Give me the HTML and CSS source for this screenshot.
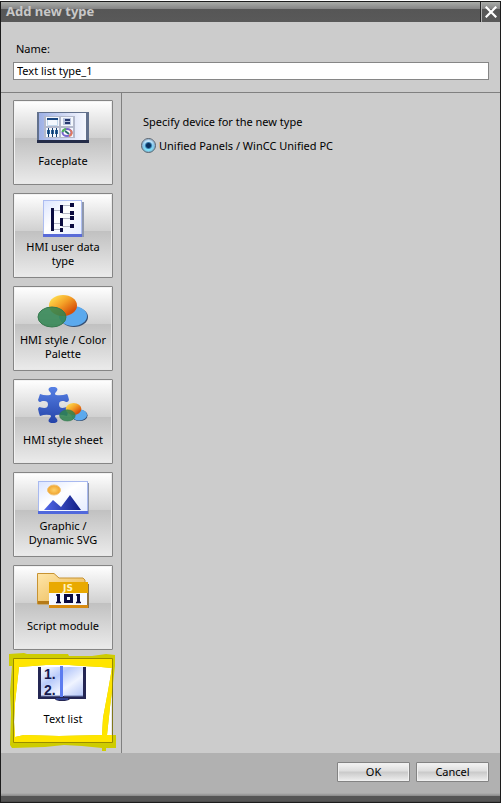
FILE: index.html
```html
<!DOCTYPE html>
<html lang="en">
<head>
<meta charset="utf-8">
<title>Add new type</title>
<link rel="stylesheet" href="styles.css">
</head>
<body>
<main class="dialog">
  <header class="titlebar">
    <h1>Add new type</h1>
    <button class="close" type="button" aria-label="Close">
      <svg viewBox="0 0 12 12" width="12" height="12"><path d="M1.500 1.500L10.500 10.500M10.500 1.500L1.500 10.500" stroke="#fff" stroke-width="2.200" stroke-linecap="square"/></svg>
    </button>
  </header>
  <div class="name-row">
    <label for="type-name">Name:</label>
    <input id="type-name" type="text" value="Text list type_1">
  </div>
  <div class="content">
    <nav class="types">
      <button class="type" type="button">
        <svg class="icon" viewBox="0 0 52 38">
          <defs><linearGradient id="screen"><stop offset="0" stop-color="#9cafe5"/><stop offset=".6" stop-color="#d7def6"/><stop offset="1" stop-color="#f5f8ff"/></linearGradient></defs>
          <path d="M0 5H52V36H0z" fill="#62718d"/><path d="M0 33H52V36H0z" fill="#242c48"/><path d="M2 6H49V33H2z" fill="url(#screen)"/>
          <path d="M7 9H38V31H7z" fill="#b3b9cc"/><path d="M9 10H22V19H9zM24 10H36V19H24zM9 21H22V30H9zM24 21H36V30H24z" fill="#f3f7fd"/>
          <path d="M10 11H21V13H10z" fill="#1a4680"/><path d="M10.500 13V18.500H20.500V13" fill="none" stroke="#c3d8ec"/>
          <path d="M26 11H34V18H26z" fill="#b9c3dd"/><path d="M28 12H33V14H28zM28 15H33V17H28z" fill="#25386e"/>
          <path d="M10 23H13V27H10zM14 23H17V27H14zM18 23H21V27H18z" fill="#286099"/><path d="M11 21H12V30H11zM15 21H16V30H15zM19 21H20V30H19z" fill="#123d70"/>
          <ellipse cx="30" cy="25.500" rx="4.500" ry="3.500" fill="#fff" stroke="#7966cd" stroke-width="2"/><path d="M25.500 25A4.500 3.500 0 0 1 29 22" fill="none" stroke="#4fb758" stroke-width="2"/><path d="M33 23A4.500 3.500 0 0 1 32 29" fill="none" stroke="#df785f" stroke-width="2"/><path d="M28 24L32 27" stroke="#276b68" stroke-width="2"/>
        </svg>
        <span>Faceplate</span>
      </button>
      <button class="type" type="button">
        <svg class="icon" viewBox="0 0 52 38">
          <defs><linearGradient id="sheet" x2="1" y2="1"><stop stop-color="#dbe5ff"/><stop offset=".45" stop-color="#fff"/><stop offset="1" stop-color="#e6edff"/></linearGradient></defs>
          <path d="M8 2H47V37H8z" fill="#8f98ad"/><path d="M6 0H45V36H6z" fill="#adbdf0"/><path d="M7 1H44V34H7z" fill="url(#sheet)"/><path d="M6 34H45V37H6z" fill="#596bd8"/>
          <path d="M15 10.500H25V5.500H34M25 10V13.500H34M15 23.500H25V18.500H34M25 23V26.500H34M15 29.500H25" fill="none" stroke="#b4b7c5"/>
          <path d="M14 8H17V31H14zM23 5H26V13H23zM23 18H26V26H23zM23 28H26V32H23zM33 3H37V7H33zM33 11H37V15H33zM33 16H37V20H33zM33 24H37V28H33z" fill="#0a0b40"/>
        </svg>
        <span>HMI user data type</span>
      </button>
      <button class="type" type="button">
        <svg class="icon" viewBox="0 0 52 38">
          <defs>
            <linearGradient id="orange" x2="1" y2="1"><stop offset=".1" stop-color="#ffdf4f"/><stop offset=".45" stop-color="#f4a027"/><stop offset=".8" stop-color="#d75009"/></linearGradient>
            <g id="palette"><ellipse cx="37" cy="24" rx="14" ry="10" fill="#354f73"/><ellipse cx="36" cy="23" rx="14" ry="10" fill="#5ba9ed"/><ellipse cx="26" cy="12.500" rx="14" ry="10.500" fill="url(#orange)"/><ellipse cx="15" cy="24" rx="14" ry="10" fill="#2f8350" fill-opacity=".86" stroke="#36794e"/></g>
          </defs>
          <use href="#palette"/>
        </svg>
        <span>HMI style / Color Palette</span>
      </button>
      <button class="type" type="button">
        <svg class="icon" viewBox="0 0 52 38">
          <defs><linearGradient id="puzzle" x2="0" y2="1"><stop stop-color="#5680e5"/><stop offset="1" stop-color="#2443a8"/></linearGradient></defs>
          <path d="M3 8Q8 10 13 9Q15 8 13 6C10 3 12 1 16 1S22 3 19 6Q17 8 19 9Q24 10 30 8Q31 9 32 14Q31 17 28 15.500C25 14.500 22 15 22 18.500S25 22.500 28 21.500Q31 20 32 23L30 30Q24 28 19 29Q17 30 19 32C22 35 20 37 16 37S10 35 13 32Q15 30 13 29Q8 28 3 30Q2 28 1 23Q2 20 4 21.500C8 22.500 11 22 11 18.500S8 14.500 4 15.500Q2 17 1 14z" fill="url(#puzzle)"/>
          <use href="#palette" transform="translate(22 16) scale(.56)"/>
        </svg>
        <span>HMI style sheet</span>
      </button>
      <button class="type" type="button">
        <svg class="icon" viewBox="0 0 52 38">
          <defs><linearGradient id="hill" x2="1"><stop stop-color="#5268ea"/><stop offset="1" stop-color="#101d82"/></linearGradient><radialGradient id="sun"><stop stop-color="#ffd169"/><stop offset="1" stop-color="#efa32e"/></radialGradient></defs>
          <path d="M3 4H52V35H3z" fill="#8b94a8"/><path d="M1 2H51V35H1z" fill="#a8b9ef"/><path d="M2 3H50V32H2z" fill="url(#sheet)"/><path d="M1 32H51V35H1z" fill="#5068dc"/>
          <ellipse cx="17" cy="11" rx="6.500" ry="5" fill="url(#sun)" stroke="#f2c477"/><path d="M7 31L16 21L24 28L33 16L44 31z" fill="url(#hill)"/>
        </svg>
        <span>Graphic / Dynamic SVG</span>
      </button>
      <button class="type" type="button">
        <svg class="icon" viewBox="0 0 52 38">
          <defs><linearGradient id="folder" x2="1" y2="1"><stop stop-color="#ffe6a8"/><stop offset="1" stop-color="#e8b24a"/></linearGradient></defs>
          <path d="M.500 1.500H17L22 6H46L48 8V32H.500z" fill="url(#folder)" stroke="#c79332"/><path d="M1 29H14V32H1z" fill="#b57a18"/>
          <path d="M14 12H52V36H14z" fill="#89734d"/><path d="M12 20H50V34H12z" fill="#f7faff"/><path d="M12 10H51V21H12z" fill="#e9a900"/><path d="M12 33H51V36H12z" fill="#d88b10"/>
          <text class="js" x="31" y="19" text-anchor="middle">JS</text>
          <g fill="none" stroke="#090a42" stroke-width="3"><path d="M21.500 22V31M28.500 23.500H34.500V29.500H28.500zM41.500 22V31"/><path d="M19 23H21M19 30.500H24M39 23H41M39 30.500H44" stroke-width="1.500"/></g>
        </svg>
        <span>Script module</span>
      </button>
      <button class="type selected" type="button" aria-pressed="true">
        <svg class="icon" viewBox="0 0 52 38">
          <defs><linearGradient id="page" x2="1" y2="1"><stop stop-color="#fff"/><stop offset=".35" stop-color="#b8cafa"/><stop offset=".65" stop-color="#f0f4ff"/><stop offset="1" stop-color="#b3c5f7"/></linearGradient></defs>
          <path d="M1 2H49V34H33Q31 36 25 36T18 34H1z" fill="#242653"/><path d="M4 2H24V31H4zM26 2H46V31H26z" fill="url(#page)"/><path d="M4 31H23M27 31H46" stroke="#7180b4"/>
          <text class="list-number" x="7" y="14">1.</text><text class="list-number" x="7" y="30">2.</text>
          <path d="M23 1H26V32H23z" fill="#5c7cf0"/><path d="M19 33H31V35H19z" fill="#30408f"/>
        </svg>
        <span>Text list</span>
        <svg class="marker" viewBox="0 0 108 98" aria-hidden="true">
          <defs>
            <clipPath id="inside"><path d="M4 5H104V90H4z"/></clipPath>
            <path id="loop" d="M0 1L15 0L18 1H59L60 3H83L97 1L106 2V13L104 30L101 54L98 82H107V95H97V98H93V95L73 93L55 92L36 94L3 95L1 92L2 60L1 39L3 13H0zM10 14L8 32L6 50L5 69L6 84L15 82L50 83L93 82L94 65L99 38L103 15L92 14L74 13L60 12L37 12z"/>
          </defs>
          <use href="#loop" fill="#cecc00" fill-rule="evenodd"/><use href="#loop" fill="#ffe500" fill-rule="evenodd" clip-path="url(#inside)"/>
          <path d="M4.500 5.500H103.500V89.500H4.500z" fill="none" stroke="#7e7400" stroke-opacity=".8"/>
        </svg>
      </button>
    </nav>
    <fieldset class="device">
      <legend>Specify device for the new type</legend>
      <label class="option"><input type="radio" name="device" checked>Unified Panels / WinCC Unified PC</label>
    </fieldset>
  </div>
  <footer class="actions">
    <button type="button">OK</button>
    <button type="button">Cancel</button>
  </footer>
</main>
</body>
</html>
```
FILE: styles.css
```css
* { box-sizing: border-box; }
body {
  margin: 0;
  padding: 1px 1px 2px 0;
  background: #fff;
  color: #000;
  font: 11px/14px "Noto Sans", "Open Sans", sans-serif;
}
button, input { font: inherit; color: inherit; }
.dialog {
  display: flex;
  flex-direction: column;
  min-height: calc(100vh - 3px);
  border: 1px solid #1c1c1c;
  background: #ccc;
}
.titlebar {
  display: flex;
  justify-content: space-between;
  height: 20px;
  background: linear-gradient(#aaaca9, #858585 7px, #565656 7px, #595959);
}
.titlebar h1 {
  margin: 0;
  padding-left: 5px;
  color: #c8c8c8;
  font-size: 13px;
  line-height: 19px;
}
.close {
  display: flex;
  align-items: center;
  justify-content: center;
  width: 20px;
  padding: 0;
  border: 0;
  border-left: 1px solid #282828;
  box-shadow: inset 1px 0 #b0b0b0;
  background: none;
}
.name-row {
  display: flex;
  flex-direction: column;
  gap: 6px;
  padding: 20px 11px 12px 12px;
  border-bottom: 1px solid #808080;
}
.name-row label { padding-left: 3px; }
.name-row input {
  width: 100%;
  height: 18px;
  padding: 0 3px 2px;
  border: 1px solid #868686;
  background: #fff;
}
.content { display: flex; flex: 1; }
.types {
  display: flex;
  flex-direction: column;
  gap: 8px;
  padding: 7px 8px 10px 12px;
  border-right: 1px solid #808080;
}
.type {
  position: relative;
  display: flex;
  flex-direction: column;
  align-items: center;
  width: 100px;
  height: 85px;
  padding: 6px 4px;
  border: 1px solid #858585;
  border-radius: 1px;
  background: linear-gradient(#fff, #d0d0d0 45%, #c1c1c1 45%, #ebebeb);
  box-shadow: inset 1px 1px #f2f2f2, inset -1px -1px #e8e8e8;
}
.type span {
  display: flex;
  align-items: center;
  height: 28px;
  margin-top: 2px;
}
.icon { width: 52px; height: 38px; flex: none; }
.selected { background: #fff; }
.marker {
  position: absolute;
  top: -6px;
  left: -5px;
  width: 108px;
  height: 98px;
  pointer-events: none;
}
.js { font: bold 9px "DejaVu Sans", sans-serif; fill: #fff2c1; }
.list-number { font: bold 14px "Liberation Sans", sans-serif; fill: #16194e; }
.device {
  flex: 1;
  min-width: 0;
  margin: 0;
  padding: 9px 19px;
  border: 0;
}
.device legend { padding: 22px 2px 0; }
.option { display: flex; align-items: center; gap: 3px; }
.option input {
  appearance: none;
  width: 15px;
  height: 15px;
  margin: 0;
  border: 1px solid #535f6c;
  border-radius: 50%;
  background: radial-gradient(circle, #092f5c 0 2px, #367bac 3px, transparent 4px), linear-gradient(#e8f5ff, #84cbf0 50%, #75efff);
  box-shadow: inset 0 0 1px 1px #8db2d3;
}
.actions {
  display: flex;
  justify-content: flex-end;
  gap: 6px;
  padding: 9px 11px 19px;
  border-bottom: 1px solid #4c4c4c;
  background: linear-gradient(to top, #555 5px, #888 5px, #b1b1b1 8px);
}
.actions button {
  width: 73px;
  height: 20px;
  padding: 0;
  border: 1px solid #838383;
  border-radius: 1px;
  background: linear-gradient(#f4f4f4, #ddd 45%, #c9c9c9 50%, #eee);
  box-shadow: inset 0 0 0 1px #f0f0f0;
}
```
